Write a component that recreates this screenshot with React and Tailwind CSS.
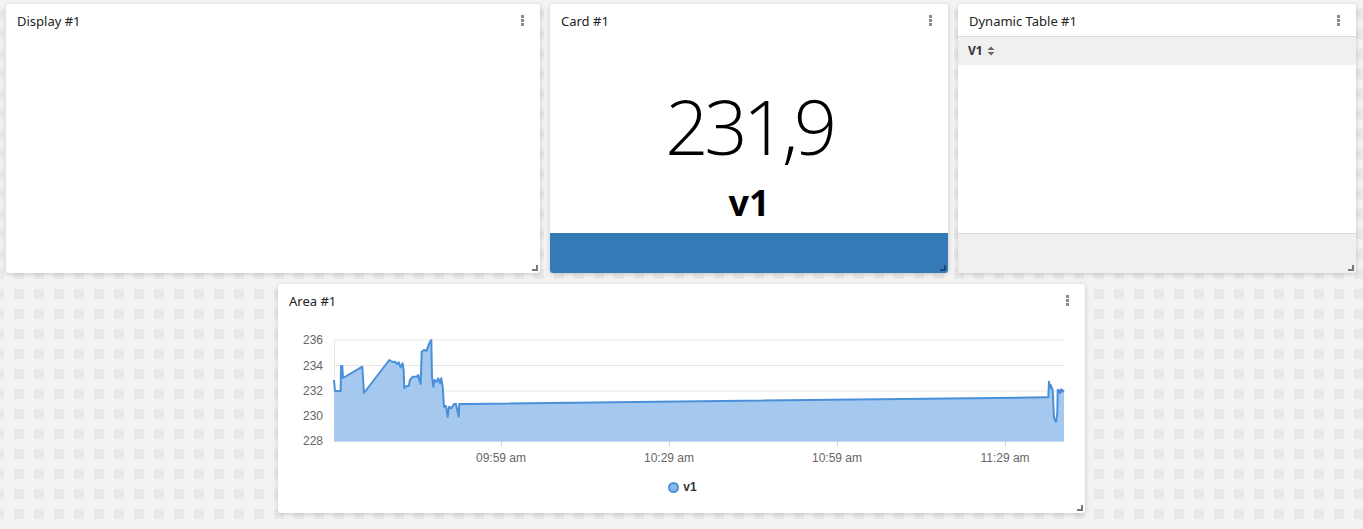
import React from 'react';

const linePts = [
  [334, 380], [335, 391], [340.7, 391], [341, 366], [342.3, 366], [343, 378], [362.3, 366.7], [364, 393],
  [389.3, 360], [392.7, 362], [395, 361.7], [397.3, 364], [398.7, 362.3], [400.7, 367.3], [402.7, 363.3],
  [403.7, 370.7], [404.3, 388], [406.7, 386], [408.7, 386], [410, 380], [412.7, 376.7], [416.7, 376.7],
  [418.3, 375], [419.3, 380], [420.7, 384], [421.7, 351.7], [424, 350], [426.7, 350.7], [428, 346.7],
  [429.3, 343.3], [431.3, 340], [432, 376.7], [433.3, 386.7], [434.7, 380], [436.7, 381.7], [438.3, 378.3],
  [440, 383.3], [441.3, 378.3], [442.7, 386.7], [444, 406.7], [446, 406], [447.7, 416.7], [449, 406.7],
  [451.3, 408.3], [454, 404], [456, 404], [458.7, 416.7], [459.3, 404], [470, 404], [1047, 397.3],
  [1048.3, 397.3], [1049, 381.7], [1050, 388], [1050.7, 385], [1052.7, 390], [1054, 418.3], [1056, 421.7],
  [1057.3, 413.3], [1057.7, 390], [1059, 390], [1060, 393.3], [1061.3, 389.3], [1062.7, 391.7], [1064, 390],
];

const yTicks = [
  { label: '236', y: 340 },
  { label: '234', y: 365.5 },
  { label: '232', y: 391 },
  { label: '230', y: 416 },
  { label: '228', y: 441 },
];

const xTicks = [
  { label: '09:59 am', x: 501 },
  { label: '10:29 am', x: 669 },
  { label: '10:59 am', x: 837 },
  { label: '11:29 am', x: 1005 },
];

function Kebab() {
  return (
    <div className="flex flex-col gap-[1px]">
      <span className="block h-[3px] w-[3px] bg-[#8a8a8a]" />
      <span className="block h-[3px] w-[3px] bg-[#8a8a8a]" />
      <span className="block h-[3px] w-[3px] bg-[#8a8a8a]" />
    </div>
  );
}

function ResizeHandle({ dark }) {
  return (
    <div
      className={`absolute bottom-[2px] right-[2px] h-[6px] w-[6px] border-b-2 border-r-2 ${
        dark ? 'border-[#1e4a73]' : 'border-[#777]'
      }`}
    />
  );
}

function Widget({ title, className, children, dark }) {
  return (
    <div className={`relative flex flex-col overflow-hidden rounded-[3px] bg-white shadow-[0_1px_5px_rgba(0,0,0,0.18)] ${className}`}>
      <div className="flex h-8 shrink-0 items-center justify-between pl-[11px] pr-[16px] pt-[3px]">
        <span className="text-[13px] text-[#222]">{title}</span>
        <div className="-mt-[3px]">
          <Kebab />
        </div>
      </div>
      {children}
      <ResizeHandle dark={dark} />
    </div>
  );
}

function AreaChart() {
  const line = linePts.map((p, i) => `${i ? 'L' : 'M'}${p[0]},${p[1]}`).join(' ');
  const area = `${line} L1064,441 L334,441 Z`;
  return (
    <svg width="807" height="162" viewBox="278 316 807 162" className="block">
      {yTicks.map((t) => (
        <line key={t.label} x1="334" x2="1064" y1={t.y} y2={t.y} stroke="#e6e6e6" strokeWidth="1" />
      ))}
      <line x1="334.5" x2="334.5" y1="340" y2="441" stroke="#e6e6e6" />
      <path d={area} fill="#a5c8ef" />
      <path d={line} fill="none" stroke="#4a90d9" strokeWidth="2" strokeLinejoin="round" />
      <line x1="334" x2="1064" y1="441.5" y2="441.5" stroke="#ccd6eb" />
      {xTicks.map((t) => (
        <g key={t.label}>
          <line x1={t.x + 0.5} x2={t.x + 0.5} y1="441" y2="447" stroke="#ccd6eb" />
          <text x={t.x} y="462" textAnchor="middle" fontSize="12" fill="#666" fontFamily="'Liberation Sans', Arial, sans-serif">
            {t.label}
          </text>
        </g>
      ))}
      {yTicks.map((t) => (
        <text key={t.label} x="323" y={t.y + 4} textAnchor="end" fontSize="12" fill="#666" fontFamily="'Liberation Sans', Arial, sans-serif">
          {t.label}
        </text>
      ))}
    </svg>
  );
}

export default function App() {
  return (
    <div className="min-h-screen w-full bg-[#f3f3f3] bg-[conic-gradient(at_10px_10px,#f3f3f3_75%,#e8e8e8_0)] bg-size-[20px_20px] bg-position-[14px_9px] pl-[6px] pt-[4px] font-['Noto_Sans','Open_Sans',sans-serif]">
      {/* Top row */}
      <div className="flex gap-[10px]">
        <Widget title="Display #1" className="h-[269px] w-[534px]" />

        <Widget title="Card #1" className="h-[269px] w-[398px]" dark>
          <div className="flex flex-1 flex-col items-center">
            <div className="mt-[52px] font-['Open_Sans',sans-serif] text-[76px] leading-none font-light tracking-[-4.5px] text-black">231,9</div>
            <div className="mt-[21px] font-['Open_Sans',sans-serif] text-[36px] leading-none font-bold text-black">v1</div>
          </div>
          <div className="h-[40px] shrink-0 bg-[#337ab7]" />
        </Widget>

        <Widget title="Dynamic Table #1" className="h-[269px] w-[398px]">
          <div className="flex h-[29px] shrink-0 items-center gap-[4px] border-t border-[#dcdcdc] bg-[#f0f0f0] px-[10px]">
            <span className="text-[12px] font-bold text-[#333]">V1</span>
            <svg width="8" height="10" viewBox="0 0 8 10">
              <path d="M4 0.5 L7.5 4 L0.5 4 Z" fill="#666" />
              <path d="M4 9.5 L7.5 6 L0.5 6 Z" fill="#666" />
            </svg>
          </div>
          <div className="flex-1" />
          <div className="h-[40px] shrink-0 border-t border-[#dcdcdc] bg-[#f0f0f0]" />
        </Widget>
      </div>

      {/* Bottom row */}
      <div className="mt-[11px] pl-[272px]">
        <Widget title="Area #1" className="h-[229px] w-[807px]">
          <AreaChart />
          <div className="flex h-[18px] items-center justify-center gap-[4px] pl-[2px]">
            <span className="block h-[11px] w-[11px] rounded-full border-2 border-[#4a90d9] bg-[#8ab8ec]" />
            <span className="font-['Liberation_Sans',Arial,sans-serif] text-[12px] font-bold text-[#333]">v1</span>
          </div>
        </Widget>
      </div>
    </div>
  );
}
